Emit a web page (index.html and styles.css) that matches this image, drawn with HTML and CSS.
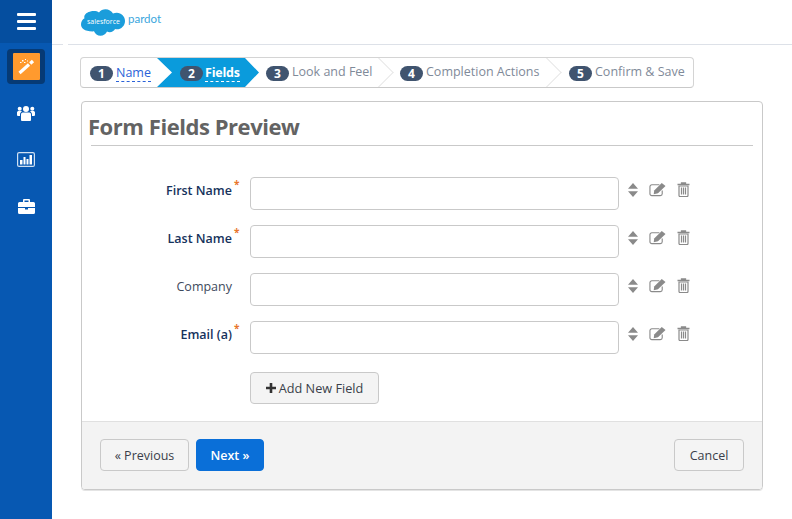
FILE: index.html
```html
<!DOCTYPE html>
<html lang="en">
<head>
<meta charset="utf-8">
<title>Form Fields</title>
<link rel="stylesheet" href="styles.css">
</head>
<body>
<aside class="sidebar">
  <div class="burger"><span></span><span></span><span></span></div>
  <nav class="nav">
    <div class="nav-active"><div class="wand">
      <svg width="20" height="20" viewBox="0 0 20 20"><path d="M3.500 16 13 7.500" stroke="#fff" stroke-width="3.200" fill="none"/><path d="M14.200 6.500 17 4" stroke="#fff" stroke-width="3.200" fill="none"/><g fill="#fff"><rect x="6" y="3" width="1.500" height="1.500"/><rect x="9" y="2" width="1" height="1"/><rect x="4" y="5" width="1.500" height="1"/><rect x="8" y="5" width="1.500" height="1"/><rect x="11" y="3.500" width="1" height="1"/></g></svg>
    </div></div>
    <div class="nav-item">
      <svg width="18" height="16" viewBox="0 0 18 16" fill="#fff"><circle cx="9" cy="4" r="3"/><circle cx="2.700" cy="3.800" r="2"/><circle cx="15.300" cy="3.800" r="2"/><path d="M4 9.500C4 8 5 7.500 6.500 7.500h5C13 7.500 14 8 14 9.500V15a1 1 0 0 1-1 1H5a1 1 0 0 1-1-1z"/><path d="M0 7.500C0 6.500.8 6 1.800 6H4c.5 0 .8.200 1 .5C3.800 7 3 8 3 9.500V11H1a1 1 0 0 1-1-1zM18 7.500C18 6.500 17.200 6 16.200 6H14c-.5 0-.8.200-1 .5 1.200.5 2 1.500 2 3V11h2a1 1 0 0 0 1-1z"/></svg>
    </div>
    <div class="nav-item">
      <svg width="18" height="15" viewBox="0 0 18 15"><rect x=".6" y=".6" width="16.800" height="13.800" rx="1.500" fill="none" stroke="#cfe0f2" stroke-width="1.200"/><g fill="#fff"><rect x="3" y="8" width="2.500" height="4.500"/><rect x="6.500" y="5" width="2" height="7.500"/><rect x="9.500" y="7" width="2" height="5.500"/><rect x="12.500" y="3" width="2.500" height="9.500"/></g></svg>
    </div>
    <div class="nav-item">
      <svg width="17" height="15" viewBox="0 0 17 15" fill="#fff"><path d="M6 0h5a1 1 0 0 1 1 1v2h-1.500V1.500h-4V3H5V1a1 1 0 0 1 1-1z"/><path d="M1.500 3h14A1.500 1.500 0 0 1 17 4.500V8H0V4.500A1.500 1.500 0 0 1 1.500 3zM0 9h7v1.500h3V9h7v4.500a1.500 1.500 0 0 1-1.500 1.500h-14A1.500 1.500 0 0 1 0 13.500z"/></svg>
    </div>
  </nav>
</aside>
<main class="main">
  <header class="topbar">
    <div class="logo">
      <svg class="cloud" width="44" height="27" viewBox="0 0 44 27"><path d="M18 3.500C19.500 1.500 22 .3 24.500.3c3.200 0 6 1.700 7.500 4.200 1.200-.5 2.500-.8 3.800-.8 4.600 0 8.200 3.700 8.200 8.300s-3.600 8.300-8.200 8.300c-.6 0-1.100-.1-1.700-.2-1 1.900-3.100 3.100-5.400 3.100-1 0-1.900-.2-2.700-.6-1.100 2.500-3.600 4.200-6.500 4.200-3 0-5.500-1.900-6.500-4.500-.4.100-.9.100-1.300.1C3.200 22.400 0 19.200 0 15.300c0-2.600 1.400-4.900 3.500-6.100C3.100 8.200 3.300 7 3.800 6 6 2.500 14 .5 18 3.500z" fill="#1b9ddb"/><text x="6" y="14.500" class="cloud-text">salesforce</text></svg>
      <span class="logo-name">pardot</span>
    </div>
  </header>
  <div class="content">
    <ol class="wizard">
      <li class="step step-done"><span class="num">1</span><span class="step-link">Name</span></li>
      <li class="step step-current"><span class="num">2</span><span class="step-link">Fields</span></li>
      <li class="step step-3"><span class="num">3</span><span class="step-text">Look and Feel</span></li>
      <li class="step step-4"><span class="num">4</span><span class="step-text">Completion Actions</span></li>
      <li class="step step-5"><span class="num">5</span><span class="step-text">Confirm &amp; Save</span></li>
    </ol>
    <section class="panel">
      <div class="panel-body">
        <h1 class="title">Form Fields Preview</h1>
        <div class="rows">
          <div class="row">
            <label class="lbl req">First Name<sup>*</sup></label>
            <div class="input"></div>
            <div class="tools"><svg width="10" height="14" viewBox="0 0 10 14" fill="#8a8a8a"><path d="M5 0 10 5.800H0zM5 14 0 8.200h10z"/></svg><svg width="17" height="15" viewBox="0 0 18 15"><use href="#edit"/></svg><svg width="13" height="15" viewBox="0 0 13 15"><use href="#trash"/></svg></div>
          </div>
          <div class="row">
            <label class="lbl req">Last Name<sup>*</sup></label>
            <div class="input"></div>
            <div class="tools"><svg width="10" height="14" viewBox="0 0 10 14" fill="#8a8a8a"><path d="M5 0 10 5.800H0zM5 14 0 8.200h10z"/></svg><svg width="17" height="15" viewBox="0 0 18 15"><use href="#edit"/></svg><svg width="13" height="15" viewBox="0 0 13 15"><use href="#trash"/></svg></div>
          </div>
          <div class="row">
            <label class="lbl">Company</label>
            <div class="input"></div>
            <div class="tools"><svg width="10" height="14" viewBox="0 0 10 14" fill="#8a8a8a"><path d="M5 0 10 5.800H0zM5 14 0 8.200h10z"/></svg><svg width="17" height="15" viewBox="0 0 18 15"><use href="#edit"/></svg><svg width="13" height="15" viewBox="0 0 13 15"><use href="#trash"/></svg></div>
          </div>
          <div class="row">
            <label class="lbl req">Email (a)<sup>*</sup></label>
            <div class="input"></div>
            <div class="tools"><svg width="10" height="14" viewBox="0 0 10 14" fill="#8a8a8a"><path d="M5 0 10 5.800H0zM5 14 0 8.200h10z"/></svg><svg width="17" height="15" viewBox="0 0 18 15"><use href="#edit"/></svg><svg width="13" height="15" viewBox="0 0 13 15"><use href="#trash"/></svg></div>
          </div>
        </div>
        <div class="add-row"><button class="btn btn-add"><svg width="10" height="10" viewBox="0 0 10 10" fill="#333"><path d="M3.700 0h2.600v3.700H10v2.600H6.300V10H3.700V6.300H0V3.700h3.700z"/></svg>Add New Field</button></div>
      </div>
      <footer class="panel-foot">
        <div class="foot-left">
          <button class="btn btn-prev">« Previous</button>
          <button class="btn btn-next">Next »</button>
        </div>
        <button class="btn btn-cancel">Cancel</button>
      </footer>
    </section>
  </div>
</main>
<svg class="defs" width="0" height="0" aria-hidden="true">
  <defs>
    <g id="edit"><path d="M14 8.500V12a2 2 0 0 1-2 2H3a2 2 0 0 1-2-2V4.500a2 2 0 0 1 2-2h8" fill="none" stroke="#8a8a8a" stroke-width="1.200"/><path d="M5.500 8.500 13.500 .5l4 3.200L9.500 11.500l-4.500 1z" fill="#8a8a8a"/></g>
    <g id="trash"><path d="M4.500 2V1h4v1M.5 2.500h12" fill="none" stroke="#8a8a8a" stroke-width="1.300"/><path d="M2 4h9v9.500a1 1 0 0 1-1 1H3a1 1 0 0 1-1-1z" fill="none" stroke="#8a8a8a" stroke-width="1.200"/><path d="M4.500 5.500v7M6.500 5.500v7M8.500 5.500v7" stroke="#8a8a8a" stroke-width="1.200"/></g>
  </defs>
</svg>
</body>
</html>
```
FILE: styles.css
```css
* { box-sizing: border-box; }
html, body { height: 100%; }
body {
  margin: 0;
  display: flex;
  height: 519px;
  overflow: hidden;
  background: #fff;
  font-family: "Open Sans", "Noto Sans", sans-serif;
  font-size: 12.500px;
  color: #16325c;
}
.sidebar { width: 52px; flex: none; background: #0758b2; }
.burger {
  height: 43px;
  background: #054e9f;
  display: flex;
  flex-direction: column;
  align-items: center;
  justify-content: center;
  gap: 4px;
}
.burger span { display: block; width: 19px; height: 3px; background: #fff; border-radius: 1px; }
.nav { display: flex; flex-direction: column; align-items: center; padding-top: 6px; }
.nav-active {
  width: 38px;
  height: 35px;
  background: #063a75;
  border-radius: 4px;
  display: flex;
  align-items: center;
  justify-content: center;
}
.wand {
  width: 27px;
  height: 27px;
  background: #ff9a2e;
  border-radius: 1px;
  display: flex;
  align-items: center;
  justify-content: center;
}
.nav-item { height: 46.500px; width: 100%; display: flex; align-items: center; justify-content: center; }
.nav-active + .nav-item { margin-top: 6px; }
.main { flex: 1; min-width: 0; }
.topbar { height: 45px; border-bottom: 1px solid #dde1e8; padding: 8px 0 0 29px; position: relative; }
.topbar::after { content: ""; position: absolute; left: 11px; bottom: -1px; width: 5px; height: 1px; background: #fff; }
.logo { display: flex; align-items: flex-start; gap: 3px; }
.cloud { margin-top: 1px; }
.cloud-text { font-size: 7px; fill: #fff; font-family: "Open Sans", sans-serif; }
.logo-name { font-size: 11.500px; line-height: 21px; color: #3aa6dd; font-family: "Lato", sans-serif; }
.content { padding: 12px 29px 0; }
.wizard {
  list-style: none;
  margin: 0 0 0 -1px;
  padding: 0;
  width: 614px;
  height: 31px;
  display: flex;
  background: #fff;
  border: 1px solid #d4d4d4;
  border-bottom-color: #c9c9c9;
  border-radius: 4px;
  font-size: 12.500px;
  color: #7f8a99;
  position: relative;
  overflow: hidden;
}
.step {
  display: flex;
  align-items: center;
  gap: 3px;
  height: 29px;
  white-space: nowrap;
  position: relative;
  flex: none;
}
.num {
  width: 23px;
  height: 15px;
  border-radius: 8px;
  background: #40546f;
  color: #fff;
  font-weight: 700;
  font-size: 12px;
  line-height: 15px;
  text-align: center;
  flex: none;
  margin-top: 1px;
}
.step-text { position: relative; top: -1px; }
.step-link { color: #2a62d8; border-bottom: 1px dashed #2a62d8; line-height: 17px; height: 18px; margin-top: 1px; }
.step-done { width: 76px; padding-left: 9px; }
.step-current {
  width: 102px;
  padding-left: 23px;
  gap: 2px;
  background: #0a9bdc;
  clip-path: polygon(0 0, 88px 0, 102px 50%, 88px 100%, 0 100%, 15px 50%);
  margin-right: -1px;
}
.step-current .step-link { color: #fff; font-weight: 700; border-bottom-color: #fff; letter-spacing: -.2px; }
.step-3 { width: 135px; padding-left: 8px; }
.step-4 { width: 168px; padding-left: 7px; }
.step-5 { padding-left: 8px; }
.step-3::after, .step-4::after {
  content: "";
  position: absolute;
  right: 4px;
  top: 3px;
  width: 22px;
  height: 22px;
  border-top: 1px solid #e7e7e7;
  border-right: 1px solid #e7e7e7;
  transform: rotate(45deg);
}
.panel {
  margin-top: 13px;
  width: 682px;
  height: 389px;
  border: 1px solid #c9c9c9;
  border-radius: 4px;
  display: flex;
  flex-direction: column;
  overflow: hidden;
  box-shadow: 0 1px 0 #e4e4e4;
}
.panel-body { flex: 1; padding: 0 9px; }
.title {
  margin: 0 0 0 -3px;
  height: 44px;
  padding-top: 8px;
  font-size: 22px;
  line-height: 32px;
  font-weight: 700;
  color: #636363;
  letter-spacing: -.45px;
  position: relative;
}
.title::after {
  content: "";
  position: absolute;
  left: 3px;
  right: 0;
  bottom: 0;
  height: 1px;
  background: #c9c9c9;
}
.rows { padding-top: 31px; display: flex; flex-direction: column; gap: 15px; }
.row { display: flex; align-items: center; height: 33px; }
.lbl {
  width: 141px;
  text-align: right;
  font-size: 12.500px;
  padding-bottom: 7px;
  margin-right: 18px;
  flex: none;
  color: #3e4a5c;
  position: relative;
}
.req { font-weight: 600; color: #16325c; }
.lbl sup {
  color: #e8762c;
  font-size: 10px;
  line-height: 1;
  font-weight: 700;
  position: absolute;
  left: 100%;
  margin-left: 2px;
  top: -3px;
}
.input {
  width: 369px;
  height: 33px;
  border: 1px solid #c9c9c9;
  border-radius: 4px;
  background: #fff;
  flex: none;
}
.tools { display: flex; align-items: center; margin: -8px 0 0 9px; }
.tools svg:nth-child(2) { margin-left: 11px; }
.tools svg:nth-child(3) { margin-left: 11px; }
.defs { position: absolute; }
.add-row { padding: 18px 0 0 159px; }
.btn {
  font-family: inherit;
  font-size: 12.500px;
  border: 1px solid #c9c9c9;
  border-radius: 4px;
  background: #f4f4f4;
  color: #3a3f4a;
  height: 32px;
  padding: 0;
  cursor: pointer;
}
.btn-add { width: 129px; display: inline-flex; align-items: center; justify-content: center; gap: 3px; font-size: 12.700px; }
.panel-foot {
  height: 68px;
  flex: none;
  background: #f3f3f3;
  border-top: 1px solid #e0e0e0;
  padding: 17px 18px 0;
  display: flex;
  justify-content: space-between;
  align-items: flex-start;
}
.foot-left { display: flex; gap: 7px; }
.btn-prev { width: 89px; }
.btn-next { width: 68px; background: #0a6fd8; border-color: #0a6fd8; color: #fff; font-weight: 600; }
.btn-cancel { width: 70px; }
```
